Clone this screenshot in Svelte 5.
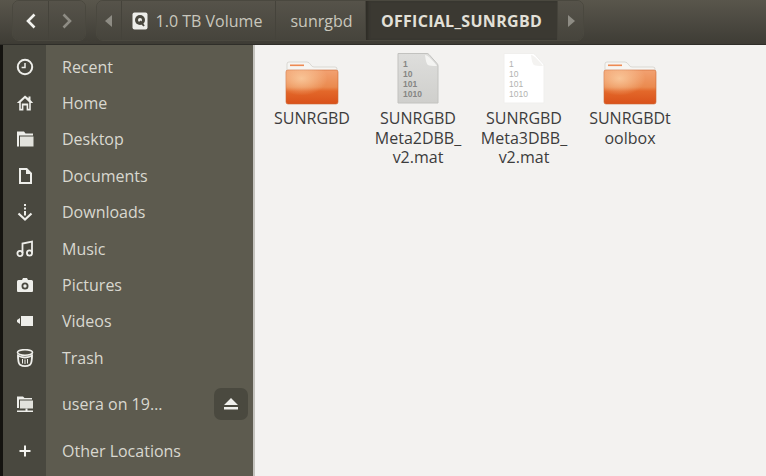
<script>
  const places = [
    { name: 'Recent', icon: 'recent' },
    { name: 'Home', icon: 'home' },
    { name: 'Desktop', icon: 'desktop' },
    { name: 'Documents', icon: 'documents' },
    { name: 'Downloads', icon: 'downloads' },
    { name: 'Music', icon: 'music' },
    { name: 'Pictures', icon: 'pictures' },
    { name: 'Videos', icon: 'videos' },
    { name: 'Trash', icon: 'trash' }
  ];

  const files = [
    { name: 'SUNRGBD', type: 'folder' },
    { name: 'SUNRGBD\nMeta2DBB_\nv2.mat', type: 'binary' },
    { name: 'SUNRGBD\nMeta3DBB_\nv2.mat', type: 'blank' },
    { name: 'SUNRGBDt\noolbox', type: 'folder' }
  ];
</script>

{#snippet placeIcon(icon)}
  <svg class="icon" viewBox="0 0 18 18" width="18" height="18">
    {#if icon === 'recent'}
      <circle cx="9" cy="9" r="7.200" fill="none" stroke="#eeeeea" stroke-width="2" />
      <path d="M9 5v4.400h-3.400" fill="none" stroke="#eeeeea" stroke-width="1.500" />
    {:else if icon === 'home'}
      <path d="M9 1.500 0.800 9h2.400v7.500h4.200v-5h3.200v5h4.200V9h2.400L14.500 6V2.500h-2v1.700z M9 4.300l4.200 4v6.500h-1V9.500H5.800v5.300h-1V8.300z" fill="#eeeeea" fill-rule="evenodd" />
    {:else if icon === 'desktop'}
      <path d="M1 1.500h7l1.500 2H17v2H3v11H1z" fill="#eeeeea" />
      <rect x="4" y="6.500" width="13.500" height="10" fill="#e2e2dc" />
    {:else if icon === 'documents'}
      <path d="M3 1h8l5 5v11H3z M5 3v12h9V7h-4V3z" fill="#eeeeea" fill-rule="evenodd" />
    {:else if icon === 'downloads'}
      <path d="M8 1h2v2H8z M8 4.500h2v2H8z" fill="#eeeeea" />
      <path d="M8 8h2v4.500h-2z" fill="#eeeeea" />
      <path d="M2.500 10.500 9 16.500l6.500-6" fill="none" stroke="#eeeeea" stroke-width="2.200" />
    {:else if icon === 'music'}
      <path d="M6.500 13V3.500L16 1.500v11" fill="none" stroke="#eeeeea" stroke-width="1.800" />
      <circle cx="4" cy="13.500" r="2.600" fill="none" stroke="#eeeeea" stroke-width="1.800" />
      <circle cx="13.500" cy="13" r="2.600" fill="none" stroke="#eeeeea" stroke-width="1.800" />
    {:else if icon === 'pictures'}
      <path d="M2.500 4H6l1-2h4l1 2h3.500A1.500 1.500 0 0 1 17 5.500V15a1 1 0 0 1-1 1H2a1 1 0 0 1-1-1V5.500A1.500 1.500 0 0 1 2.500 4z M9 6.500a3.500 3.500 0 1 0 0 7a3.500 3.500 0 0 0 0-7z M9 8.300a1.700 1.700 0 1 1 0 3.400a1.700 1.700 0 0 1 0-3.400z" fill="#eeeeea" fill-rule="evenodd" />
    {:else if icon === 'videos'}
      <path d="M1 8l3-2v6l-3-2z M5 4h12v10H5z" fill="#eeeeea" />
    {:else if icon === 'trash'}
      <ellipse cx="9" cy="3.500" rx="7.500" ry="2.800" fill="none" stroke="#eeeeea" stroke-width="1.600" />
      <path d="M1 5q0 10 2.500 11.500q2.500 1.500 5.500 1.500t5.500-1.500Q17 15 17 5q-3 2.500-8 2.500T1 5z M3 8q.2 6 1.500 7q2 1.300 4.500 1.300t4.500-1.300q1.300-1 1.500-7q-3 1.400-6 1.400T3 8z" fill="#eeeeea" fill-rule="evenodd" />
      <path d="M6.500 10v4.500M9 10.500v4.500M11.500 10v4.500" stroke="#eeeeea" stroke-width="1" />
    {:else if icon === 'network'}
      <path d="M1 1.500h6l1.500 1.500H16v1.500H3v8.500H1z" fill="#eeeeea" />
      <rect x="4" y="5.500" width="13" height="8" fill="#e2e2dc" />
      <path d="M9.500 13.500h2v2h-2z M1 15.500h16v1.500H1z" fill="#eeeeea" />
    {:else if icon === 'other'}
      <path d="M8 3.500h2V8h4.500v2H10v4.500H8V10H3.500V8H8z" fill="#f4f4f0" />
    {/if}
  </svg>
{/snippet}

{#snippet fileIcon(type)}
  {#if type === 'folder'}
    <svg class="thumb" viewBox="0 0 54 44" width="54" height="44">
      <defs>
        <linearGradient id="body" x1="0" y1="0" x2="0" y2="1">
          <stop offset="0" stop-color="#f2a171" />
          <stop offset="0.5" stop-color="#ea8a4f" />
          <stop offset="0.62" stop-color="#e3682a" />
          <stop offset="1" stop-color="#d9511a" />
        </linearGradient>
        <radialGradient id="glow" cx="0.3" cy="0.25" r="0.5">
          <stop offset="0" stop-color="#fbd0a4" stop-opacity="0.8" />
          <stop offset="1" stop-color="#fbd0a4" stop-opacity="0" />
        </radialGradient>
      </defs>
      <path d="M2 3q0-2 2-2h18q2 0 4 3q1 2 3 2h21q2 0 2 2v6H2z" fill="#f6f5f2" stroke="#c9c6bf" stroke-width="0.600" />
      <rect x="5" y="3.500" width="14" height="1.600" fill="#ee8a52" />
      <rect x="1" y="9" width="52" height="34" rx="2" fill="url(#body)" stroke="#cf6a35" stroke-width="0.600" />
      <rect x="1" y="9" width="52" height="34" rx="2" fill="url(#glow)" />
    </svg>
  {:else}
    <svg class="thumb" viewBox="0 0 44 52" width="44" height="52">
      <defs>
        <linearGradient id="sheet" x1="0" y1="0" x2="0" y2="1">
          <stop offset="0" stop-color="#dededc" />
          <stop offset="1" stop-color="#cfcfcc" />
        </linearGradient>
      </defs>
      <path d="M2 0.500h29q1 0 2 1l8 9q1 1 1 2.500v37H2z" fill={type === 'binary' ? 'url(#sheet)' : '#ffffff'} stroke={type === 'binary' ? '#c2c2bf' : '#f0efed'} />
      <path d="M29 2q1 9 3 10t9 1q-2-3-6-7t-6-4z" fill={type === 'binary' ? '#f4f4f2' : '#f4f3f1'} />
      <g class={type === 'binary' ? 'bits dark' : 'bits light'}>
        <text x="7" y="13.500">1</text>
        <text x="7" y="23.500">10</text>
        <text x="7" y="34">101</text>
        <text x="7" y="44">1010</text>
      </g>
    </svg>
  {/if}
{/snippet}

<div class="window">
  <header>
    <div class="group nav">
      <button class="seg back"><svg viewBox="0 0 12 18" width="12" height="18"><path d="M9.500 2.500 3 9l6.500 6.500" fill="none" stroke="#f2f2ee" stroke-width="2.600" /></svg></button>
      <button class="seg fwd"><svg viewBox="0 0 12 18" width="12" height="18"><path d="M2.500 2.500 9 9l-6.500 6.500" fill="none" stroke="#8e8c84" stroke-width="2.600" /></svg></button>
    </div>
    <div class="group path">
      <button class="seg arrow"><svg viewBox="0 0 8 12" width="8" height="12"><path d="M7 0v12L0 6z" fill="#8e8c84" /></svg></button>
      <button class="seg volume">
        <svg viewBox="0 0 16 18" width="16" height="18">
          <rect x="0.500" y="0.500" width="15" height="17" rx="2" fill="#eeeeea" />
          <circle cx="8" cy="8" r="5" fill="#4a483f" />
          <circle cx="8" cy="8" r="2" fill="#eeeeea" />
          <path d="M8 9l4 5" stroke="#4a483f" stroke-width="2" />
        </svg>
        1.0 TB Volume
      </button>
      <button class="seg sun">sunrgbd</button>
      <button class="seg current">OFFICIAL_SUNRGBD</button>
      <button class="seg arrow end"><svg viewBox="0 0 8 12" width="8" height="12"><path d="M1 0v12l7-6z" fill="#8e8c84" /></svg></button>
    </div>
  </header>

  <div class="body">
    <div class="edge"></div>
    <aside>
      <ul>
        {#each places as place}
          <li>
            <span class="cell">{@render placeIcon(place.icon)}</span>
            <span class="label">{place.name}</span>
          </li>
        {/each}
      </ul>
      <ul class="mounts">
        <li>
          <span class="cell">{@render placeIcon('network')}</span>
          <span class="label">usera on 19…</span>
          <button class="eject" aria-label="Eject">
            <svg viewBox="0 0 14 12" width="14" height="12"><path d="M7 0l7 7H0z M0 9h14v2.500H0z" fill="#f0f0ec" /></svg>
          </button>
        </li>
      </ul>
      <ul class="other">
        <li>
          <span class="cell">{@render placeIcon('other')}</span>
          <span class="label">Other Locations</span>
        </li>
      </ul>
    </aside>

    <main>
      {#each files as file}
        <div class="file">
          <div class="thumb-box">{@render fileIcon(file.type)}</div>
          <div class="name">{file.name}</div>
        </div>
      {/each}
    </main>
  </div>
</div>

<style>
  :global(body) {
    margin: 0;
    background: #141310;
    overflow: hidden;
  }

  .window {
    width: 766px;
    height: 476px;
    display: flex;
    flex-direction: column;
    font-family: "Open Sans", "Noto Sans", sans-serif;
    font-size: 16px;
  }

  header {
    height: 45px;
    box-sizing: border-box;
    display: flex;
    align-items: flex-start;
    gap: 10px;
    padding-left: 12px;
    background: linear-gradient(#59564c, #3e3c35);
    border-bottom: 1px solid #2f2e29;
  }

  button {
    font: inherit;
    margin: 0;
    padding: 0;
    color: inherit;
    background: none;
    border: 0;
  }

  .group {
    display: flex;
    height: 41px;
    box-sizing: border-box;
    border: 1px solid #4a483f;
    border-radius: 7px;
    overflow: hidden;
  }

  .seg {
    display: flex;
    align-items: center;
    justify-content: center;
    height: 100%;
    border-right: 1px solid #45433b;
    color: #c9c7bd;
    background: linear-gradient(#56534a, #46443c);
  }

  .nav .seg {
    width: 36px;
  }

  .nav .fwd,
  .path .end {
    border-right: 0;
  }

  .path .arrow {
    width: 25px;
  }

  .volume {
    width: 154px;
    gap: 8px;
    padding-right: 3px;
  }

  .sun {
    width: 90px;
    padding-left: 2px;
  }

  .current {
    width: 192px;
    background: #3b3932;
    box-shadow: inset 3px 0 3px -1px #2e2c26;
    color: #e2e0d8;
    font-weight: 700;
    letter-spacing: 0.3px;
  }

  .body {
    flex: 1;
    display: flex;
    min-height: 0;
  }

  .edge {
    width: 3px;
    background: #141310;
  }

  aside {
    width: 250px;
    box-sizing: border-box;
    padding-top: 3.400px;
    background: linear-gradient(to right, #49483f 43px, #5d5b4f 43px);
    color: #d9d8d0;
  }

  ul {
    list-style: none;
    margin: 0;
    padding: 0;
  }

  li {
    height: 36.400px;
    display: flex;
    align-items: center;
  }

  .mounts {
    margin-top: 10px;
  }

  .other {
    margin-top: 11px;
  }

  .cell {
    width: 43px;
    margin-right: 16px;
    display: flex;
    justify-content: center;
  }

  .icon {
    display: block;
  }

  .eject {
    margin-left: auto;
    margin-right: 5px;
    width: 34px;
    height: 32px;
    display: flex;
    align-items: center;
    justify-content: center;
    background: #4a493f;
    border-radius: 7px;
  }

  main {
    flex: 1;
    display: flex;
    align-items: flex-start;
    padding: 5px 0 0 4px;
    background: #f3f2f0;
    border-left: 2px solid #c4c3be;
    color: #3c3c3c;
  }

  .file {
    width: 106px;
    display: flex;
    flex-direction: column;
    align-items: center;
  }

  .thumb-box {
    height: 55px;
    display: flex;
    align-items: flex-end;
  }

  .thumb {
    display: block;
  }

  .name {
    margin-top: 4px;
    text-align: center;
    white-space: pre-line;
    line-height: 19.500px;
  }

  .bits text {
    font-family: "Liberation Sans", sans-serif;
    font-size: 8.500px;
    font-weight: 700;
  }

  .bits.dark text {
    fill: #868684;
  }

  .bits.light text {
    fill: #b2b2af;
    font-weight: 400;
  }
</style>
